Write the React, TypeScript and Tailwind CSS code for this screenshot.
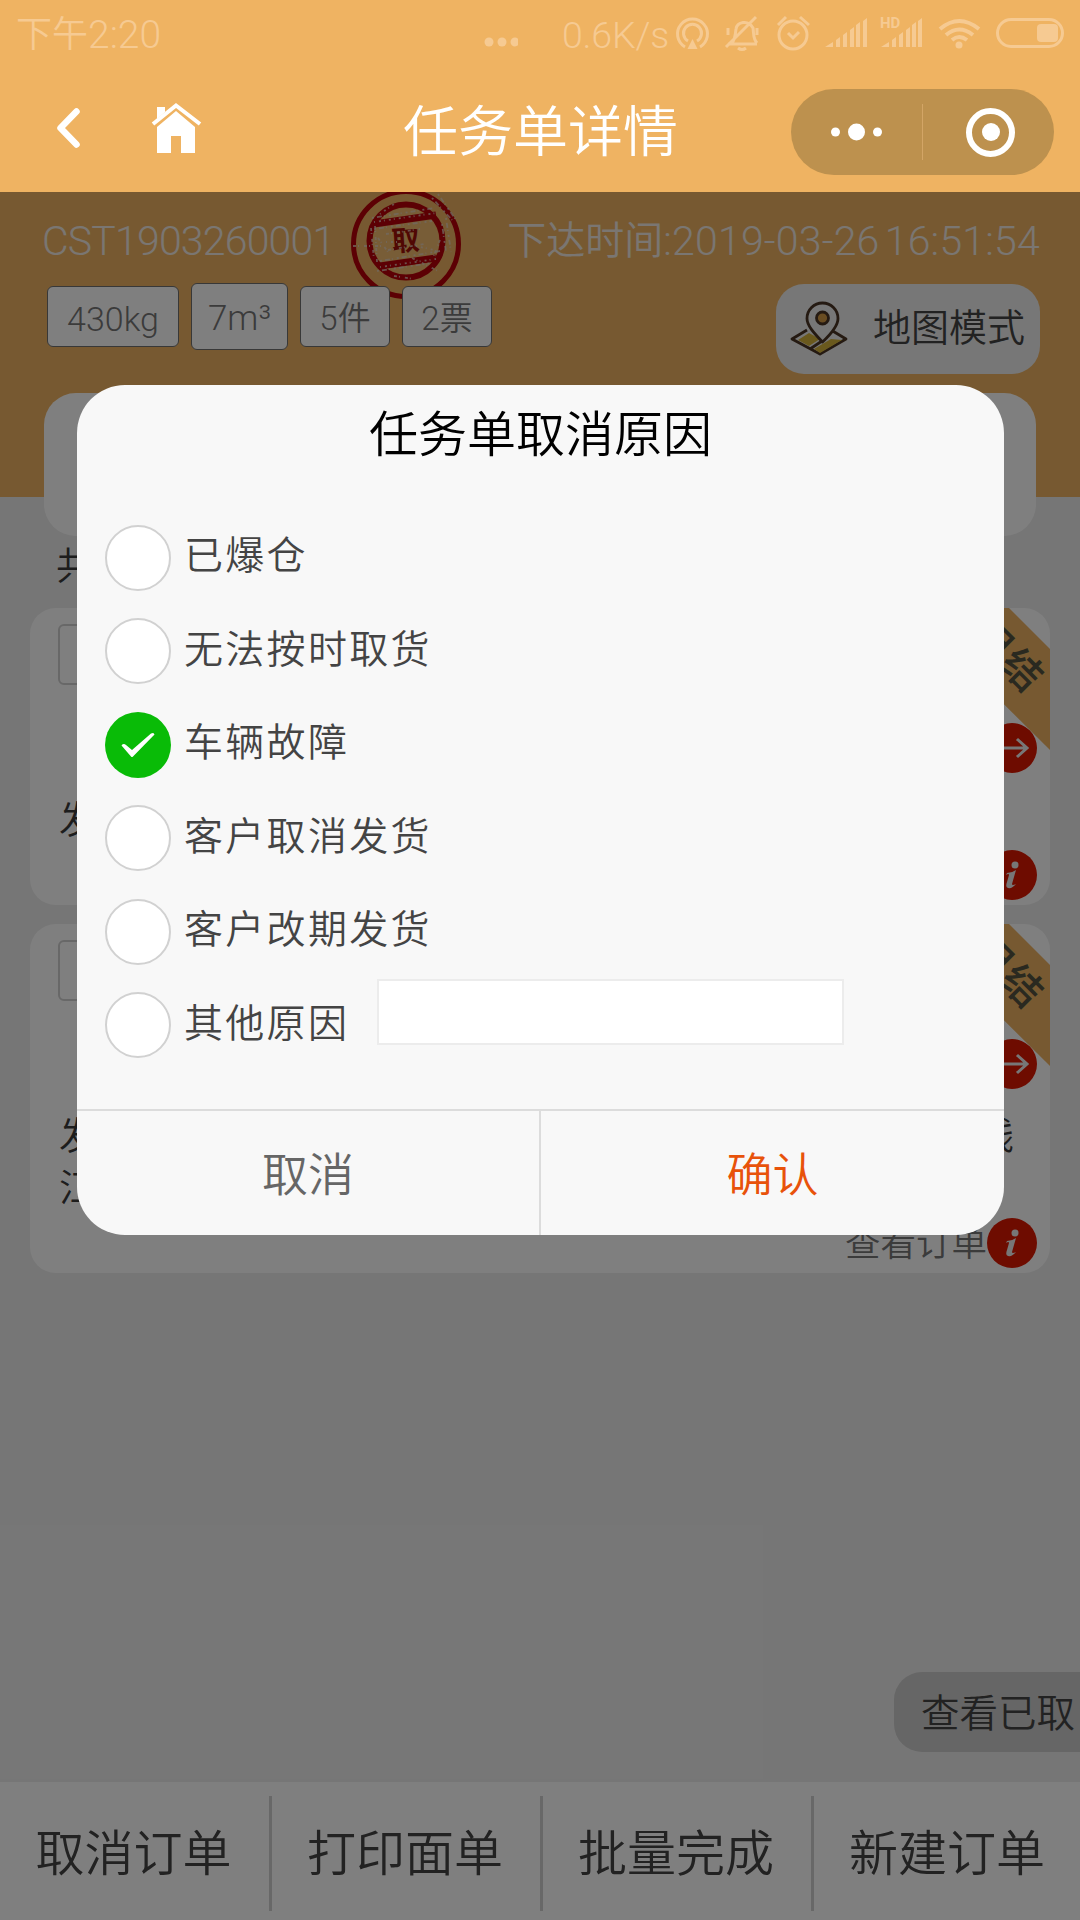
import { useState } from "react";
import type { ReactNode } from "react";

const REASONS = ["已爆仓", "无法按时取货", "车辆故障", "客户取消发货", "客户改期发货", "其他原因"];
const ACTIONS = ["取消订单", "打印面单", "批量完成", "新建订单"];

function StatusBar() {
  return (
    <div className="flex h-[68px] items-center pl-[16px] text-[36px] leading-none text-[#f6ca92]">
      <span className="flex w-[468px] items-center pt-[2px]">
        下午<span className="text-[39px]">2:20</span>
      </span>
      <svg width="34" height="12" viewBox="0 0 34 12" className="mt-4 fill-current">
        <circle cx="5" cy="6" r="4.5" />
        <circle cx="18" cy="6" r="4.5" />
        <circle cx="31" cy="6" r="4.5" />
      </svg>
      <span className="ml-[44px] w-[108px] pt-[3px] text-[37.5px] tracking-[-0.2px]">0.6K/s</span>
      <svg width="400" height="40" viewBox="670 14 400 40" className="overflow-visible" fill="none" stroke="currentColor" strokeWidth="3">
        <path d="M685 47a15 15 0 1 1 15 0M688 41a9 9 0 1 1 9 0" />
        <path d="m692.500 39 5 10h-10z" fill="currentColor" stroke="none" />
        <path d="M728 44h29M732 43c4-5 3-8 4-14 1-7 12-10 17-1 1 7 0 11 4 15M726 47l30-30M728 28v7M757 28v7M738 48q4 3 8 0" />
        <circle cx="793" cy="35" r="14" />
        <path d="m788 33 5 5 6-6M778 25l8-8M800 17l9 8" />
        <g fill="currentColor" stroke="none">
          <path d="M825 47 833 42v5zM836 40l4-3v10h-4zM843 35l4-3v15h-4zM850 30l4-3v20h-4zM856 25l4-3v25h-4zM863 21l4-3v29h-4z" />
          <path d="M881 47 889 42v5zM892 40l4-3v10h-4zM899 35l4-3v15h-4zM906 30l4-3v20h-4zM912 25l4-3v25h-4zM918 21l4-3v29h-4z" />
          <text x="880" y="28" fontSize="15" fontWeight="700">HD</text>
          <circle cx="959" cy="45" r="3.500" />
        </g>
        <path strokeWidth="4" d="M940 29q19-16 39 0M946 35q13-11 27 0M952 40q7-6 15 0" />
        <rect x="997.500" y="19.500" width="65" height="27" rx="13.500" />
        <rect x="1037" y="24" width="21" height="18" rx="4" fill="currentColor" stroke="none" />
      </svg>
    </div>
  );
}

function NavBar() {
  return (
    <div className="flex h-[124px] items-start text-white">
      <svg width="24" height="42" viewBox="0 0 24 42" className="ml-[56px] mt-[39px]" fill="none" stroke="currentColor" strokeWidth="6.500" strokeLinecap="round" strokeLinejoin="round">
        <path d="M20.500 4.500 4.500 21l16 16.500" />
      </svg>
      <svg width="52" height="52" viewBox="0 0 52 52" className="ml-[71px] mt-[34px] fill-current">
        <path d="M6 5h8v5L6 17z" />
        <path d="M2 22 25 3.500 49 22" fill="none" stroke="currentColor" strokeWidth="4" />
        <path d="M6 25 25 9l19 16v26H30V34H20v17H6z" />
      </svg>
      <h1 className="ml-[200px] mt-[37px] w-[275px] text-[55px] leading-[55px] font-[350]">任务单详情</h1>
      <div className="ml-[113px] mt-[21px] flex h-[86px] w-[263px] items-center rounded-full bg-[#bd914e]">
        <svg width="131" height="20" viewBox="0 0 131 20" className="fill-current">
          <circle cx="44.500" cy="10" r="4.500" />
          <circle cx="65.500" cy="10" r="8.500" />
          <circle cx="86.500" cy="10" r="4.500" />
        </svg>
        <div className="h-[56px] w-px bg-[#d3a566]" />
        <div className="ml-[43px] flex size-[49px] items-center justify-center rounded-full border-6 border-white">
          <div className="size-[18px] rounded-full bg-white" />
        </div>
      </div>
    </div>
  );
}

function Stamp() {
  return (
    <svg width="112" height="112" viewBox="0 0 112 112" className="absolute left-[350px] top-[-4px]" fill="none" stroke="#b80008">
      <circle cx="56" cy="53" r="33" fill="#f4c27c" fillOpacity="0.5" stroke="none" />
      <circle cx="56" cy="56" r="52.500" strokeWidth="5" />
      <circle cx="56" cy="53" r="36.500" strokeWidth="6" />
      <path d="M24 36 86 27M30 78l56-8" strokeWidth="7" />
      <text x="41.500" y="62.500" fontSize="28" fontWeight="700" fill="#a01008" stroke="none" transform="rotate(-4 56 53)">取</text>
      <g stroke="#e3d3c3" strokeWidth="1.800" opacity="0.75">
        <path strokeDasharray="2 3 5 2 1 4" d="M22 30 84 20M24 41l58-8M30 73l60-10M27 83l55-8M82 10l20 22M88 6l18 26M96 30l5 34M92 36l4 28" />
        <path strokeDasharray="3 2 1 5" d="M3 58h28M21 40l3 32M25 38l2 36M36 46l34-5M38 62l36-6M62 70l28 14M44 88l20 3M28 50l10 14M90 52l-8 20" />
        <path strokeDasharray="1 4 2 3" d="M24 34l62-9M30 79l56-8M36 54h12M66 58l18 4M30 26l14-10" />
      </g>
    </svg>
  );
}

function Tag({ children, className }: { children: ReactNode; className: string }) {
  return (
    <div className={`flex items-center justify-center rounded-md border-[1.5px] border-[#707070] bg-white pt-[4px] leading-none text-[#777] ${className}`}>
      {children}
    </div>
  );
}

function MapIcon() {
  return (
    <svg width="58" height="56" viewBox="0 0 58 56" fill="none" stroke="#4a3424" strokeWidth="2.800" strokeLinejoin="round">
      <path d="m17 29-15 9 28 15 26-15-15-9" fill="#eee" />
      <path d="m8 39 11-7 11 6-11 7zM24 48l17-10 11 1-22 13z" fill="#d5b23a" stroke="none" />
      <path d="m20 48 15-10" />
      <path d="M32.500 41C25 33 17 25 17 17.500a15.500 15.500 0 0 1 31 0C48 25 41 33 32.500 41z" fill="#eee" />
      <circle cx="32.500" cy="17" r="6" fill="#d59a45" />
    </svg>
  );
}

function RoundIcon({ kind }: { kind: "arrow" | "info" }) {
  return (
    <svg width="50" height="50" viewBox="0 0 50 50" className="shrink-0">
      <circle cx="25" cy="25" r="25" fill="#dd1800" />
      {kind === "arrow" ? (
        <path d="M10 25h29M30 16l10 9-10 9" fill="none" stroke="#eee" strokeWidth="3" />
      ) : (
        <g fill="#eee">
          <circle cx="28" cy="15" r="3.500" />
          <path d="M20 23q5 0 9-3l-4 14q0 2 4 0-4 5-8 4-3-1-1-6l2-7q0-2-3 0z" />
        </g>
      )}
    </svg>
  );
}

function OrderCard({ lines, tall }: { lines: string[]; tall?: boolean }) {
  return (
    <div className={`relative mx-[30px] flex flex-col overflow-hidden rounded-[26px] bg-white ${tall ? "h-[349px]" : "h-[297px]"}`}>
      <div className="ml-[28px] mt-[16px] size-[61px] rounded-md border-2 border-[#d0d0d0]" />
      {/* settlement ribbon across the corner */}
      <svg width="150" height="150" viewBox="0 0 150 150" className="absolute right-0 top-0">
        <path d="M7 0h102l41 41v101z" fill="#efb362" />
        <text x="-64" y="15" fontSize="40" fontWeight="500" fill="#555340" transform="translate(125 64) rotate(45)">月结</text>
      </svg>
      <div className="mr-[13px] mt-[38px] flex justify-end">
        <RoundIcon kind="arrow" />
      </div>
      <div className="ml-[29px] mr-[36px] mt-[21px] text-[38px] leading-[52px] text-[#3a3a3a]">
        {lines.map((line) => (
          <p key={line} className="whitespace-nowrap text-justify [text-align-last:justify] last:[text-align-last:left]">{line}</p>
        ))}
      </div>
      <div className="mr-[13px] mt-auto mb-[4px] flex items-center justify-end text-[35.5px] leading-[50px] text-[#777]">
        <span className="pt-[2px]">查看订单</span>
        <RoundIcon kind="info" />
      </div>
    </div>
  );
}

function CancelDialog() {
  const [selected, setSelected] = useState(2);

  return (
    <div className="ml-[77px] mt-[193px] flex h-[850px] w-[927px] flex-col overflow-hidden rounded-[48px] bg-[#f8f8f8]">
      <h2 className="mt-[26px] text-center text-[49px] leading-[49px] text-black">任务单取消原因</h2>
      <div className="mt-[51px] ml-[28px]">
        {REASONS.map((reason, i) => (
          <div key={reason} className="flex h-[93.5px] items-center" onClick={() => setSelected(i)}>
            {i === selected ? (
              <div className="flex size-[66px] items-center justify-center rounded-full bg-[#09bb07]">
                <svg width="34" height="26" viewBox="0 0 34 26" fill="#fff">
                  <path d="M.5 13.500q2-2.500 4.500-.5l6 5L30 1.500q3-1.500 3.500 1L12 24.500q-1 1-2 0z" />
                </svg>
              </div>
            ) : (
              <div className="size-[66px] rounded-full border-2 border-[#d1d1d1] bg-white" />
            )}
            <span className="mb-[2px] ml-[13px] text-[39px] leading-none tracking-[2.3px] text-[#444]">{reason}</span>
            {i === REASONS.length - 1 && (
              <input className="mb-[27px] ml-[28px] h-[66px] w-[467px] border-[2.5px] border-[#ececec] bg-white" />
            )}
          </div>
        ))}
      </div>
      <div className="mt-auto flex h-[126px] border-t-2 border-[#dcdcdc] text-[46px]">
        <button className="w-[462px] pt-[4px] text-[#666]">取消</button>
        <button className="flex-1 border-l-2 border-[#dcdcdc] pt-[4px] text-[#e8520a]">确认</button>
      </div>
    </div>
  );
}

export default function App() {
  return (
    <div className="relative flex h-[1920px] w-[1080px] flex-col overflow-hidden bg-[#ededed] font-[Roboto,'Noto_Sans_CJK_SC',sans-serif] font-[350]">
      <header className="h-[192px] shrink-0 bg-[#efb362]">
        <StatusBar />
        <NavBar />
      </header>

      <main className="flex flex-1 flex-col">
        <section className="relative h-[305px] overflow-hidden bg-[#efb362] pl-[42px] pr-[40px]">
          <Stamp />
          <div className="flex h-[91px] items-center justify-between pt-[7px] text-[41px] leading-none whitespace-nowrap text-[#f4ede5]">
            <span className="tracking-[-0.8px]">CST1903260001</span>
            <span className="flex items-center">
              <span className="text-[39px]">下达时间</span>
              <span className="tracking-[0.2px] [word-spacing:-5px]">:2019-03-26 16:51:54</span>
            </span>
          </div>
          <div className="relative flex items-start justify-between">
            <div className="ml-[5px] flex h-[67px] items-center gap-[12px]">
              <Tag className="h-[61px] w-[132px] text-[34px]">430kg</Tag>
              <Tag className="h-[67px] w-[97px] text-[35px]">7m³</Tag>
              <Tag className="h-[61px] w-[90px] text-[33px]">5件</Tag>
              <Tag className="h-[61px] w-[90px] text-[33px]">2票</Tag>
            </div>
            <div className="mt-px flex h-[90px] w-[264px] items-center justify-between rounded-[28px] bg-[#eee] pl-[14px] pr-[15px] text-[38px] text-[#444]">
              <MapIcon />
              <span className="mb-[1px]">地图模式</span>
            </div>
          </div>
        </section>
        <div className="relative mx-[44px] mt-[-104px] h-[143px] shrink-0 rounded-[32px] bg-white" />
        <p className="ml-[56px] flex h-[72px] items-center pb-[11px] text-[38px] text-[#3a3a3a]">共2单</p>
        <div className="flex flex-col gap-[19px]">
          <OrderCard lines={["发"]} />
          <OrderCard tall lines={["发 钱", "江"]} />
        </div>
        <div className="mt-[399px] flex h-[80px] w-[186px] shrink-0 items-center self-end rounded-l-[28px] bg-[#ccc] pl-[27px] pt-[4px] text-[38.5px] whitespace-nowrap text-[#444]">
          查看已取
        </div>
        <nav className="mt-auto flex h-[138px] shrink-0 items-center overflow-hidden bg-white pt-[4px]">
          {ACTIONS.map((action) => (
            <button key={action} className="h-[115px] w-[271px] shrink-0 border-r-3 border-[#d0d0d0] pr-[2px] pt-[3px] text-[49px] text-[#444] first:w-[272px] last:border-r-0 last:pr-[5px]">
              {action}
            </button>
          ))}
        </nav>
      </main>

      <div className="absolute inset-x-0 top-[192px] bottom-0 bg-black/50">
        <CancelDialog />
      </div>
    </div>
  );
}
